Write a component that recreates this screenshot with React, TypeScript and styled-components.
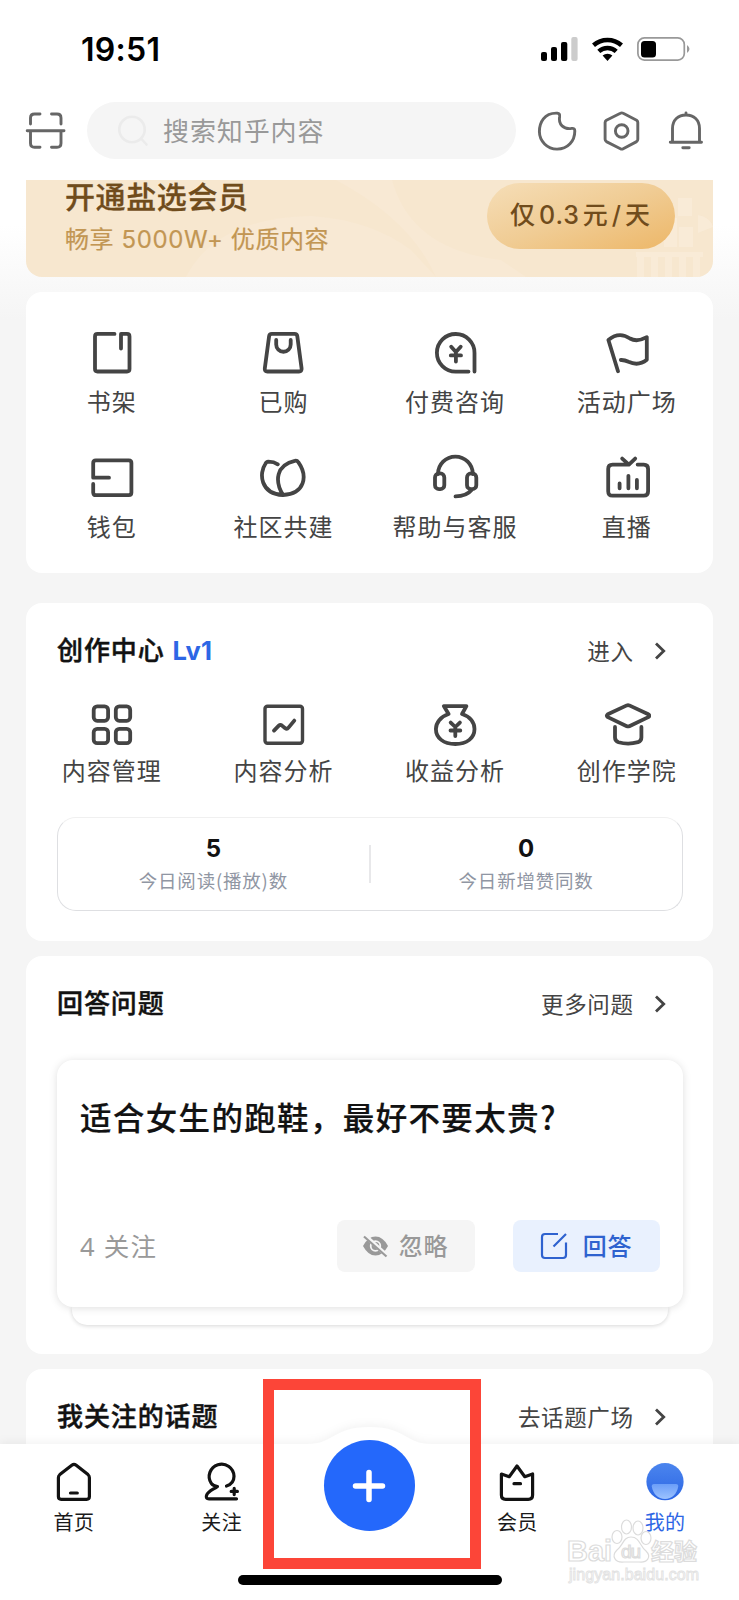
import React from 'react';
import styled, { createGlobalStyle } from 'styled-components';

const GlobalStyle = createGlobalStyle`
  * { box-sizing: border-box; }
  body { margin: 0; background: #fff; }
`;

const cjk = `'Noto Sans CJK SC', sans-serif`;

const Screen = styled.div`
  position: relative;
  width: 739px;
  height: 1600px;
  overflow: hidden;
  display: flex;
  flex-direction: column;
  font-family: Inter, ${cjk};
  color: #444;
  background: linear-gradient(#fff 0, #fff 225px, #f5f5f5 320px);
`;

const StatusBar = styled.header`
  height: 98px;
  flex: none;
  display: flex;
  justify-content: space-between;
  align-items: flex-start;
  padding: 29px 48px 0 81px;
`;

const Clock = styled.time`
  margin-top: 1px;
  font: 600 32px/40px Inter, sans-serif;
  letter-spacing: 0.3px;
  color: #000;
`;

const StatusIcons = styled.svg`
  width: 152px;
  height: 40px;
`;

const TopBar = styled.div`
  height: 82px;
  flex: none;
  display: flex;
  align-items: flex-start;
  padding: 4px 29px 0 21px;
`;

const TopIcon = styled.svg<{ $gap?: number }>`
  width: 48px;
  height: 48px;
  margin: 5px 0 0 ${(p) => p.$gap ?? 0}px;
  flex: none;
  fill: none;
  stroke: #666;
  stroke-width: 2.9;
  stroke-linecap: round;
  stroke-linejoin: round;
`;

const SearchBox = styled.div`
  display: flex;
  align-items: center;
  width: 429px;
  height: 57px;
  margin-left: 18px;
  padding: 0 0 2px 29px;
  border-radius: 29px;
  background: #f5f5f5;
  color: #999;
  font: 400 26px/38px ${cjk};
  letter-spacing: 0.9px;
  svg { margin-right: 13px; margin-top: 4px; }
`;

const Feed = styled.main`
  flex: 1;
  min-height: 0;
  overflow: hidden;
  padding: 0 26.5px 0 26px;
`;

const Banner = styled.section`
  position: relative;
  height: 97px;
  display: flex;
  justify-content: space-between;
  padding: 0 38px 0 39px;
  border-radius: 0 0 16px 16px;
  overflow: hidden;
  background: #f7e7cf;
`;

const BannerArt = styled.svg`
  position: absolute;
  inset: 0;
`;

const BannerCopy = styled.div`
  position: relative;
  h2 {
    margin: 0;
    font: 500 30px/30px ${cjk};
    letter-spacing: 0.6px;
    color: #704c1c;
    -webkit-text-stroke: 0.3px #704c1c;
  }
  p {
    margin: 13px 0 0;
    font: 400 24px/34px Inter, ${cjk};
    letter-spacing: 0.6px;
    color: #c29653;
    -webkit-text-stroke: 0.2px #c29653;
  }
`;

const PriceButton = styled.div`
  position: relative;
  width: 188px;
  height: 66px;
  margin-top: 3px;
  border-radius: 33px;
  text-align: center;
  font: 500 25px/65px Inter, ${cjk};
  letter-spacing: 0.9px;
  word-spacing: -4.5px;
  color: #704c1c;
  background: linear-gradient(160deg, #f5dcb4 5%, #f0cc94 50%, #edb768 100%);
`;

const Card = styled.section<{ $h: number; $gap: number }>`
  height: ${(p) => p.$h}px;
  margin-top: ${(p) => p.$gap}px;
  border-radius: 16px;
  background: #fff;
`;

const Grid = styled.div<{ $top: number }>`
  display: grid;
  grid-template-columns: repeat(4, 1fr);
  padding-top: ${(p) => p.$top}px;
`;

const Cell = styled.div<{ $label: number }>`
  height: 125px;
  display: flex;
  flex-direction: column;
  align-items: center;
  svg {
    width: 48px;
    height: 48px;
    fill: none;
    stroke: #444;
    stroke-width: 3.8;
    stroke-linecap: round;
    stroke-linejoin: round;
  }
  span {
    margin-top: ${(p) => p.$label}px;
    font: 400 24px/36px ${cjk};
    letter-spacing: 1px;
    white-space: nowrap;
  }
`;

const CardHead = styled.div`
  display: flex;
  justify-content: space-between;
  align-items: center;
  height: 96px;
  padding: 0 47px 0 31px;
`;

const CardTitle = styled.h3`
  margin: 0;
  font: 500 26px/38px Inter, ${cjk};
  letter-spacing: 0.9px;
  color: #121212;
  -webkit-text-stroke: 0.45px #121212;
  b {
    margin-left: 8px;
    font-weight: 700;
    font-size: 25.5px;
    letter-spacing: 0.2px;
    color: #2d66e5;
    -webkit-text-stroke: 0;
  }
`;

const MoreLink = styled.span`
  display: flex;
  align-items: center;
  font: 400 22.5px/34px ${cjk};
  letter-spacing: 0.6px;
  padding-bottom: 2px;
  svg { margin: 1px 0 0 20px; }
`;

const Stats = styled.div`
  display: flex;
  align-items: center;
  height: 94px;
  margin: -9px 30px 0 31px;
  border: 1px solid #dedfe2;
  border-top-color: #f0f0f0;
  border-radius: 19px;
`;

const Stat = styled.div`
  flex: 1;
  display: flex;
  flex-direction: column;
  align-items: center;
  strong {
    font: 700 24px/30px Inter, sans-serif;
    color: #121212;
  }
  span {
    margin-top: 2px;
    font: 400 18.5px/28px ${cjk};
    letter-spacing: 0.8px;
    color: #9096a3;
  }
  & + & { margin-left: -2px; }
`;

const Divider = styled.i`
  width: 2px;
  height: 38px;
  background: #e8e8ea;
`;

const QuestionStack = styled.div`
  margin: 8px 30px 0 31px;
`;

const Question = styled.article`
  position: relative;
  height: 247px;
  display: flex;
  flex-direction: column;
  justify-content: space-between;
  padding: 32px 23px 35px;
  border-radius: 16px;
  background: #fff;
  box-shadow: 0 1px 8px rgba(0, 0, 0, 0.13);
  h4 {
    margin: 0;
    font: 500 31.5px/48px ${cjk};
    letter-spacing: 1.35px;
    color: #121212;
    white-space: nowrap;
    -webkit-text-stroke: 0.2px #121212;
  }
`;

const NextCard = styled.div`
  height: 18px;
  margin: 0 15px;
  border-radius: 0 0 15px 15px;
  background: #fff;
  box-shadow: 0 1px 4px rgba(0, 0, 0, 0.16);
`;

const Actions = styled.div`
  display: flex;
  align-items: center;
`;

const Followers = styled.span`
  flex: 1;
  font: 400 25.5px/36px 'Noto Sans', ${cjk};
  letter-spacing: 1.3px;
  color: #999;
`;

const Action = styled.div<{ $primary?: boolean }>`
  display: flex;
  align-items: center;
  justify-content: center;
  width: ${(p) => (p.$primary ? 147 : 138)}px;
  height: 52px;
  margin-left: ${(p) => (p.$primary ? 38 : 0)}px;
  padding-bottom: 3px;
  border-radius: 8px;
  background: ${(p) => (p.$primary ? '#e9f1fe' : '#f5f5f5')};
  color: ${(p) => (p.$primary ? '#2e62cf' : '#999')};
  font: 500 24px/36px ${cjk};
  letter-spacing: 0.8px;
  svg {
    margin-top: 3px;
    margin-right: ${(p) => (p.$primary ? 15 : 11)}px;
  }
`;

const TabBar = styled.nav`
  position: relative;
  flex: none;
  height: 156px;
  display: grid;
  grid-template-columns: repeat(5, 1fr);
  padding-top: 14px;
  background: #fff;
`;

const TabShape = styled.svg`
  position: absolute;
  left: 0;
  top: -34px;
  filter: drop-shadow(0 -2px 4px rgba(0, 0, 0, 0.05));
`;

const Tab = styled.div<{ $active?: boolean }>`
  position: relative;
  display: flex;
  flex-direction: column;
  align-items: center;
  color: ${(p) => (p.$active ? '#2d66e5' : '#1a1a1a')};
  font: 400 20px/30px ${cjk};
  letter-spacing: 0.4px;
  svg {
    width: 48px;
    height: 48px;
    margin-bottom: 1px;
    fill: none;
    stroke: #121212;
    stroke-width: 3.2;
    stroke-linecap: round;
    stroke-linejoin: round;
  }
`;

const PlusButton = styled.div`
  position: relative;
  justify-self: center;
  display: flex;
  align-items: center;
  justify-content: center;
  width: 91px;
  height: 91px;
  margin-top: -18px;
  border-radius: 50%;
  background: #2468fb;
`;

const Highlight = styled.div`
  position: absolute;
  left: 263px;
  top: 1379px;
  width: 218px;
  height: 190px;
  border: 11.5px solid #fc4538;
`;

const HomeIndicator = styled.div`
  position: absolute;
  left: 238px;
  top: 1575px;
  width: 264px;
  height: 10px;
  border-radius: 5px;
  background: #000;
`;

const Watermark = styled.svg`
  position: absolute;
  left: 562px;
  top: 1516px;
`;

const Chevron = () => (
  <svg width="12" height="18" viewBox="0 0 12 18" fill="none" stroke="#444" strokeWidth="2.8">
    <path d="M2 1.5 9.7 9 2 16.5" />
  </svg>
);

const icons: Record<string, React.ReactNode> = {
  书架: <path d="M26.5 4.9H9.5Q7 4.9 7 7.4V40Q7 42.5 9.5 42.5H39Q41.5 42.5 41.5 40V7.4Q41.5 4.9 39 4.9H33V19.5" />,
  已购: (
    <>
      <path d="M12.8 4.9H35.6Q38 4.9 38.3 7.3L42.6 39.5Q42.9 42.5 40 42.5H8.4Q5.4 42.5 5.8 39.5L10.1 7.3Q10.4 4.9 12.8 4.9Z" />
      <path d="M17.2 11V15.5A7.2 7.2 0 0 0 31.7 15.5V11" />
    </>
  ),
  付费咨询: (
    <>
      <path d="M37.5 42.6H24.7A18.8 18.8 0 1 1 43.5 24V42.6" />
      <path d="M20.2 17.7 24.9 23 29.7 17.7M24.9 23.5V32.5M19.8 26.4H30" />
    </>
  ),
  活动广场: <path d="M15 42.2 5.4 11Q16 2 27 9.5Q34 13.5 43.8 8.2V30.8Q35.5 37.5 25.5 32.8Q21.5 30.8 17.8 31" />,
  钱包: <path d="M21 23.7H5.2V9Q5.2 6.4 7.8 6.4H40.8Q43.4 6.4 43.4 9V38.6Q43.4 41.2 40.8 41.2H7.8Q5.2 41.2 5.2 38.6V30" />,
  社区共建: (
    <>
      <path d="M18.8 10.3Q15 7.8 9.3 7.7Q7.3 7.8 6.3 10C0 19 1 40 24 41C46 40 49 22 39.3 8.2Q38 6.2 35.8 6.8C17 11 15.5 27 24 41" />
    </>
  ),
  帮助与客服: (
    <>
      <path d="M7 20A17.3 17.3 0 0 1 41.8 20M40.5 36Q35.5 42.2 24.5 42.4" />
      <rect x="4" y="19.4" width="9.3" height="15.8" rx="4" />
      <rect x="36" y="19.4" width="9.3" height="15.8" rx="4" />
    </>
  ),
  直播: (
    <>
      <path d="M34.6 10.6H40.8Q45.1 10.6 45.1 15V37.2Q45.1 41.6 40.8 41.6H9.6Q5.2 41.6 5.2 37.2V15Q5.2 10.6 9.6 10.6H26M19.2 4.6 25.9 10.6 32.2 4.6" />
      <path d="M16.6 29.5V34.3M25.4 21.8V34.3M33.9 26V34.3" />
    </>
  ),
  内容管理: (
    <>
      <rect x="5.7" y="5.4" width="14.4" height="14.4" rx="3.5" />
      <rect x="27.8" y="5.4" width="14.4" height="14.4" rx="3.5" />
      <rect x="5.7" y="27.8" width="14.4" height="14.4" rx="3.5" />
      <rect x="27.8" y="27.8" width="14.4" height="14.4" rx="3.5" />
    </>
  ),
  内容分析: (
    <>
      <rect x="6" y="5.3" width="37.5" height="37" rx="2.5" strokeWidth="3.4" />
      <path d="M15 29.6 19.8 24.7Q21.3 23.3 23 24.6L26.2 27.2Q28 28.4 29.5 26.6L35.3 19.6" />
    </>
  ),
  收益分析: (
    <>
      <path d="M12.8 5.1H35.4L31 13C39.5 15.5 43.5 22 43.5 28C43.5 37 36 43 24.3 43C12.5 43 4.9 37 4.9 28C4.9 22 9.5 15.5 17.6 13Z" />
      <path d="M19.7 21.6 24.3 26 28.9 21.6M24.3 26.3V35M19.5 29.5H29.3" />
    </>
  ),
  创作学院: (
    <>
      <path d="M23.8 4.4Q25 3.9 26.3 4.4L45.3 13.2Q47.5 14.7 45.3 16.1L26.3 25.2Q25 25.7 23.8 25.2L4.8 16.1Q2.8 14.7 4.8 13.2Z" />
      <path d="M12 26V36.5Q12 40 15.5 41.2Q25 44 35 41.2Q38.4 40 38.4 36.5V26" />
    </>
  ),
};

const IconGrid = ({ names, top, label }: { names: string[]; top: number; label: number }) => (
  <Grid $top={top}>
    {names.map((name) => (
      <Cell key={name} $label={label}>
        <svg viewBox="0 0 48 48">{icons[name]}</svg>
        <span>{name}</span>
      </Cell>
    ))}
  </Grid>
);

const Heading = ({ title, level, more }: { title: string; level?: string; more: string }) => (
  <CardHead>
    <CardTitle>
      {title}
      {level && <b>{level}</b>}
    </CardTitle>
    <MoreLink>
      {more}
      <Chevron />
    </MoreLink>
  </CardHead>
);

export default function App() {
  return (
    <Screen>
      <GlobalStyle />
      <StatusBar>
        <Clock>19:51</Clock>
        <StatusIcons viewBox="539 29 152 40">
          <rect x="541" y="52" width="6" height="9" rx="2" />
          <rect x="551" y="47" width="6" height="14" rx="2" />
          <rect x="561" y="42" width="6.3" height="19" rx="2" />
          <rect x="571.3" y="37" width="6.3" height="24" rx="2" fill="#ccc" />
          <g fill="none" stroke="#000" strokeWidth="4.5">
            <path d="M593.5 45.3A21.3 21.3 0 0 1 621.5 45.3" />
            <path d="M598.8 51.4A13 13 0 0 1 616.2 51.4" />
          </g>
          <path d="M602.6 55.5A7.5 7.5 0 0 1 612.4 55.5L607.5 61Z" />
          <rect x="637.9" y="37.9" width="46.4" height="22.2" rx="6.5" fill="none" stroke="#999" strokeWidth="1.7" />
          <rect x="641" y="41" width="15" height="16.5" rx="3.5" />
          <path d="M687 45Q692 49 687 53Z" fill="#999" />
        </StatusIcons>
      </StatusBar>
      <TopBar>
        <TopIcon viewBox="0 0 48 48">
          <path d="M9.5 17V11Q9.5 7 13.5 7H19M30.5 7H36Q40 7 40 11V17M9.5 24V36.3Q9.5 40.3 13.5 40.3H19M30.5 40.3H36Q40 40.3 40 36.3V24M6.2 23.8H43" />
        </TopIcon>
        <SearchBox>
          <svg width="34" height="34" viewBox="0 0 34 34" fill="none" stroke="#ebebeb" strokeWidth="2.6" strokeLinecap="round">
            <circle cx="16" cy="14.5" r="12.7" />
            <path d="m25.5 24 5 5.5" />
          </svg>
          搜索知乎内容
        </SearchBox>
        <TopIcon viewBox="0 0 48 48" $gap={17}>
          <path d="M24.5 6.2C11 5.5 6.4 16 6.4 24.5A17.7 17.7 0 0 0 24 42.1C35 42.1 41.8 34 41.8 24Q41.8 21 38.8 21.4C30.5 22.6 25.2 17.5 26.6 9.5Q27 6.3 24.5 6.2Z" />
        </TopIcon>
        <TopIcon viewBox="0 0 48 48" $gap={17}>
          <path d="M22.4 6.3Q23.8 5.5 25.2 6.3L38.6 13.2Q39.8 14 39.8 15.5V32.3Q39.8 33.8 38.6 34.6L25.2 41.7Q23.8 42.5 22.4 41.7L8.4 34.6Q7.1 33.8 7.1 32.3V15.5Q7.1 14 8.4 13.2Z" />
          <circle cx="23.7" cy="24" r="6.3" />
        </TopIcon>
        <TopIcon viewBox="0 0 48 48" $gap={16}>
          <path d="M8.3 35.2H39.5M10.5 35V21.5C10.5 13 16.2 8 24 8S37.5 13 37.5 21.5V35M24 8V6M20.8 40.8H27.2" />
        </TopIcon>
      </TopBar>

      <Feed>
        <Banner>
          <BannerArt width="687" height="97" viewBox="0 0 687 97">
            <path d="M160 97Q190 38 285 36Q345 40 385 70L410 97Z" fill="#f8e9d4" />
            <path d="M340 0H366Q385 70 475 80L500 97H410Q385 40 310 0Z" fill="#f8e9d4" />
            <g fill="#fbf0df" opacity=".5">
              <path d="M652 18h14v18h-14zM638 38h13v29h-13zM672 35q12 2 15 12l-15 6zM653 47h14v20h-14zM610 72h67v5h-67zM611 77h7v20h-7zM625 77h7v20h-7zM639 77h7v20h-7zM653 77h7v20h-7zM667 77h7v20h-7z" />
            </g>
          </BannerArt>
          <BannerCopy>
            <h2>开通盐选会员</h2>
            <p>畅享 5000W+ 优质内容</p>
          </BannerCopy>
          <PriceButton>仅 0.3 元 / 天</PriceButton>
        </Banner>

        <Card $h={281} $gap={15}>
          <IconGrid top={37} label={6} names={['书架', '已购', '付费咨询', '活动广场', '钱包', '社区共建', '帮助与客服', '直播']} />
        </Card>

        <Card $h={338} $gap={30}>
          <Heading title="创作中心" level="Lv1" more="进入" />
          <IconGrid top={2} label={3} names={['内容管理', '内容分析', '收益分析', '创作学院']} />
          <Stats>
            <Stat>
              <strong>5</strong>
              <span>今日阅读(播放)数</span>
            </Stat>
            <Divider />
            <Stat>
              <strong>0</strong>
              <span>今日新增赞同数</span>
            </Stat>
          </Stats>
        </Card>

        <Card $h={398} $gap={15}>
          <Heading title="回答问题" more="更多问题" />
          <QuestionStack>
            <Question>
              <h4>适合女生的跑鞋，最好不要太贵?</h4>
              <Actions>
                <Followers>4 关注</Followers>
                <Action>
                  <svg width="25" height="24" viewBox="0 0 25 24" fill="none">
                    <path d="M0 12Q5 2.5 12.5 2.5T25 12Q20 21.5 12.5 21.5T0 12Z" fill="#999" />
                    <circle cx="12.5" cy="12" r="4.8" stroke="#f5f5f5" strokeWidth="1.8" />
                    <path d="m2 1.5 22 20" stroke="#f5f5f5" strokeWidth="4" />
                    <path d="m1 2.5 22.5 20" stroke="#999" strokeWidth="2.2" />
                  </svg>
                  忽略
                </Action>
                <Action $primary>
                  <svg width="28" height="28" viewBox="0 0 28 28" fill="none" stroke="currentColor" strokeWidth="2.2">
                    <path d="M18 2H5Q2 2 2 5V23Q2 26 5 26H23Q26 26 26 23V10.5M13.5 14.5 26 2" />
                  </svg>
                  回答
                </Action>
              </Actions>
            </Question>
            <NextCard />
          </QuestionStack>
        </Card>

        <Card $h={200} $gap={15}>
          <Heading title="我关注的话题" more="去话题广场" />
        </Card>
      </Feed>

      <TabBar>
        <TabShape width="739" height="190" viewBox="0 0 739 190">
          <path d="M0 34H307C335 34 332 17 369.5 17S404 34 432 34H739V190H0Z" fill="#fff" />
        </TabShape>
        <Tab>
          <svg viewBox="0 0 48 48">
            <path d="M21.8 7.2Q24 5.4 26.2 7.2L38 16.6Q39.4 17.8 39.4 19.8V38.5Q39.4 41.3 36.6 41.3H11.2Q8.4 41.3 8.4 38.5V19.8Q8.4 17.8 9.8 16.6ZM20.5 35H27.3" />
          </svg>
          首页
        </Tab>
        <Tab>
          <svg viewBox="0 0 48 48">
            <path d="M28.5 28C33.5 26.5 36 22.5 36 18.3A12.4 12.4 0 1 0 13.3 25.4Q15 28 19.5 28.5C15.5 31.5 10 33 8.5 37.5Q7.5 40.8 11 40.8H38.5M36.2 30.4V36.6M33.2 33.4H39.4" />
          </svg>
          关注
        </Tab>
        <PlusButton>
          <svg width="34" height="34" viewBox="0 0 34 34" stroke="#fff" strokeWidth="5.5" strokeLinecap="round">
            <path d="M17 3.5V30.5M3.5 17H30.5" />
          </svg>
        </PlusButton>
        <Tab>
          <svg viewBox="0 0 48 48">
            <path d="M8.4 16 16.2 18.7 24 8 31.8 18.7 39.6 16V37Q39.6 41.3 35.3 41.3H12.7Q8.4 41.3 8.4 37ZM21 25.7H27.5" />
          </svg>
          会员
        </Tab>
        <Tab $active>
          <svg viewBox="0 0 48 48">
            <defs>
              <linearGradient id="face" x2="0" y2="1">
                <stop stopColor="#4b85ee" />
                <stop offset="1" stopColor="#2c66e4" />
              </linearGradient>
              <linearGradient id="mouth" x2="0" y2="1">
                <stop stopColor="#6b9ef8" />
                <stop offset="1" stopColor="#9cc2ff" />
              </linearGradient>
            </defs>
            <circle cx="24" cy="23.7" r="18.6" fill="url(#face)" stroke="none" />
            <path d="M13 26H35Q37.5 26 37.2 28.5C36 36 31 41 24 41S12 36 10.8 28.5Q10.5 26 13 26Z" fill="url(#mouth)" stroke="none" />
          </svg>
          我的
        </Tab>
      </TabBar>

      <Highlight />
      <HomeIndicator />
      <Watermark width="142" height="72" viewBox="562 1516 142 72">
        <g fill="#fff" fillOpacity=".85" stroke="#dcdcdc" strokeWidth="1.2">
          <text x="567" y="1561" fontFamily="Liberation Sans" fontWeight="700" fontSize="29" textLength="45" lengthAdjust="spacingAndGlyphs">Bai</text>
          <ellipse cx="617" cy="1537" rx="5" ry="6.5" />
          <ellipse cx="626.5" cy="1527" rx="5" ry="7" />
          <ellipse cx="638" cy="1528" rx="5" ry="7" />
          <ellipse cx="646" cy="1538" rx="5" ry="6.5" />
          <path d="M631 1537C640 1537 640 1547 646 1551C652 1557 647 1563 639 1562H624C615 1563 611 1556 617 1550C623 1546 623 1537 631 1537Z" />
          <text x="621" y="1558" fontFamily="Liberation Sans" fontWeight="400" fontSize="19" textLength="20">du</text>
          <text x="651" y="1560" fontFamily="Noto Sans CJK SC" fontWeight="700" fontSize="23" textLength="46">经验</text>
        </g>
        <text x="569" y="1580" fontFamily="Liberation Sans" fontSize="16" textLength="130" fill="#fff" stroke="#e2e2e2" strokeWidth=".9">jingyan.baidu.com</text>
      </Watermark>
    </Screen>
  );
}
